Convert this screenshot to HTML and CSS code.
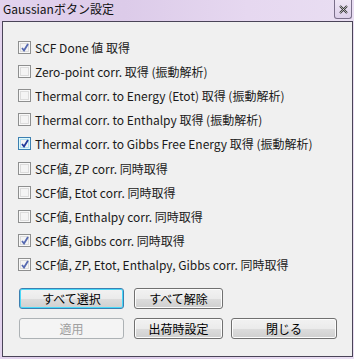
FILE: index.html
```html
<!DOCTYPE html>
<html lang="ja">

<head>
    <meta charset="UTF-8">
    <title>Gaussianボタン設定</title>
    <link rel="stylesheet" href="styles.css">
</head>

<body>
    <div class="window">
        <div class="titlebar">
            <span class="title_text">Gaussianボタン設定</span>
            <span class="close_btn">
                <svg width="9" height="9" viewBox="0 0 9 9">
                    <path d="M1 1 L8 8 M8 1 L1 8" stroke="#333" stroke-width="2" fill="none" />
                    <path d="M1 1 L8 8 M8 1 L1 8" stroke="#fff" stroke-width="0.6" fill="none" />
                </svg>
            </span>
        </div>

        <div class="client">
            <ul class="check_list">
                <li class="check_row"><span class="check_box checked soft"></span>SCF Done 値 取得</li>
                <li class="check_row"><span class="check_box"></span>Zero-point corr. 取得 (振動解析)</li>
                <li class="check_row"><span class="check_box"></span>Thermal corr. to Energy (Etot) 取得 (振動解析)</li>
                <li class="check_row"><span class="check_box"></span>Thermal corr. to Enthalpy 取得 (振動解析)</li>
                <li class="check_row"><span class="check_box checked hot"></span>Thermal corr. to Gibbs Free Energy 取得 (振動解析)</li>
                <li class="check_row"><span class="check_box"></span>SCF値, ZP corr. 同時取得</li>
                <li class="check_row"><span class="check_box"></span>SCF値, Etot corr. 同時取得</li>
                <li class="check_row"><span class="check_box"></span>SCF値, Enthalpy corr. 同時取得</li>
                <li class="check_row"><span class="check_box checked soft"></span>SCF値, Gibbs corr. 同時取得</li>
                <li class="check_row"><span class="check_box checked soft"></span>SCF値, ZP, Etot, Enthalpy, Gibbs corr. 同時取得</li>
            </ul>
            <!-- // .check_list -->

            <div class="btn_row">
                <button type="button" class="btn btn_default">すべて選択</button>
                <button type="button" class="btn">すべて解除</button>
            </div>
            <div class="btn_row">
                <button type="button" class="btn" disabled>適用</button>
                <button type="button" class="btn">出荷時設定</button>
                <button type="button" class="btn btn_wide">閉じる</button>
            </div>
        </div>
        <!-- // .client -->
    </div>
</body>

</html>
```

FILE: styles.css
```css
html,
body {
    box-sizing: border-box;
    margin: 0;
    padding: 0;
}

*,
*:before,
*:after {
    box-sizing: inherit;
}

.window {
    display: flex;
    flex-direction: column;
    width: 354px;
    height: 359px;
    background: linear-gradient(90deg, #e3d3ee 0%, #dccbe9 35%, #e6d8f0 70%, #e9def2 100%);
    font-family: "Noto Sans CJK JP", "DejaVu Sans", sans-serif;
    color: #000;
}

/* title bar */
.titlebar {
    display: flex;
    align-items: flex-start;
    justify-content: space-between;
    height: 21px;
    padding-left: 3px;
}

.title_text {
    margin-top: 1px;
    font-size: 12px;
    line-height: 16px;
    color: #111;
}

.close_btn {
    display: flex;
    align-items: center;
    justify-content: center;
    width: 18px;
    height: 19px;
    margin-right: 2px;
    border: 1px solid #7a6f8a;
    border-top: none;
    border-radius: 0 0 3px 3px;
    background: linear-gradient(#efe6f5, #ddd0ea);
}

/* client area */
.client {
    flex: 1;
    margin: 0 1px 2px 2px;
    padding: 18px 0 0 15px;
    background: #f0f0f0;
    border: 1px solid #4a4458;
}

.check_list {
    list-style: none;
    margin: 0;
    padding: 0;
}

.check_row {
    display: flex;
    align-items: center;
    height: 24.2px;
    font-size: 12px;
    white-space: nowrap;
    color: #1a1a1a;
    margin-top: -5px;
    margin-bottom: 5px;
}

.check_box {
    position: relative;
    flex: none;
    width: 13px;
    height: 13px;
    margin-right: 4px;
    border: 1px solid #8e8f8f;
    background: #f4f4f4;
    box-shadow: inset 0 0 0 1px #f8f8f8, inset 0 0 0 2px #dcdcdc;
}

.check_box.hot {
    border-color: #3c7fb1;
    box-shadow: inset 0 0 0 1px #def9fa, inset 0 0 0 2px #b2dff2;
}

.check_box.checked:after {
    content: '';
    position: absolute;
    left: 2px;
    top: 1px;
    width: 8px;
    height: 9px;
    background: url("data:image/svg+xml;utf8,<svg xmlns='http://www.w3.org/2000/svg' width='8' height='9'><path d='M1 5 L3 7.5 L7 1' stroke='%23213b9b' stroke-width='1.8' fill='none'/></svg>") no-repeat;
}

.check_box.soft:after {
    opacity: 0.75;
}

/* buttons */
.btn_row {
    display: flex;
    gap: 10px;
    margin-top: 11px;
    padding-left: 1px;
}

.btn_row+.btn_row {
    margin-top: 9px;
}

.btn {
    width: 105px;
    height: 21px;
    padding: 0;
    font-family: "Noto Sans CJK JP", sans-serif;
    font-size: 12px;
    line-height: 17px;
    color: #000;
    border: 1px solid #707070;
    border-radius: 3px;
    background: linear-gradient(#f2f2f2 0%, #ebebeb 50%, #dddddd 50%, #cfcfcf 100%);
    box-shadow: inset 0 0 0 1px #fcfcfc;
}

.btn+.btn {
    width: 89px;
}

.btn.btn_wide {
    width: 106px;
    margin-left: -2px;
}

.btn_default {
    border-color: #3c7fb1;
    box-shadow: inset 0 0 0 1px #48d9f9;
}

.btn:disabled {
    color: #a0a0a0;
    border-color: #adb2b5;
    background: #f4f4f4;
    box-shadow: none;
}
```
